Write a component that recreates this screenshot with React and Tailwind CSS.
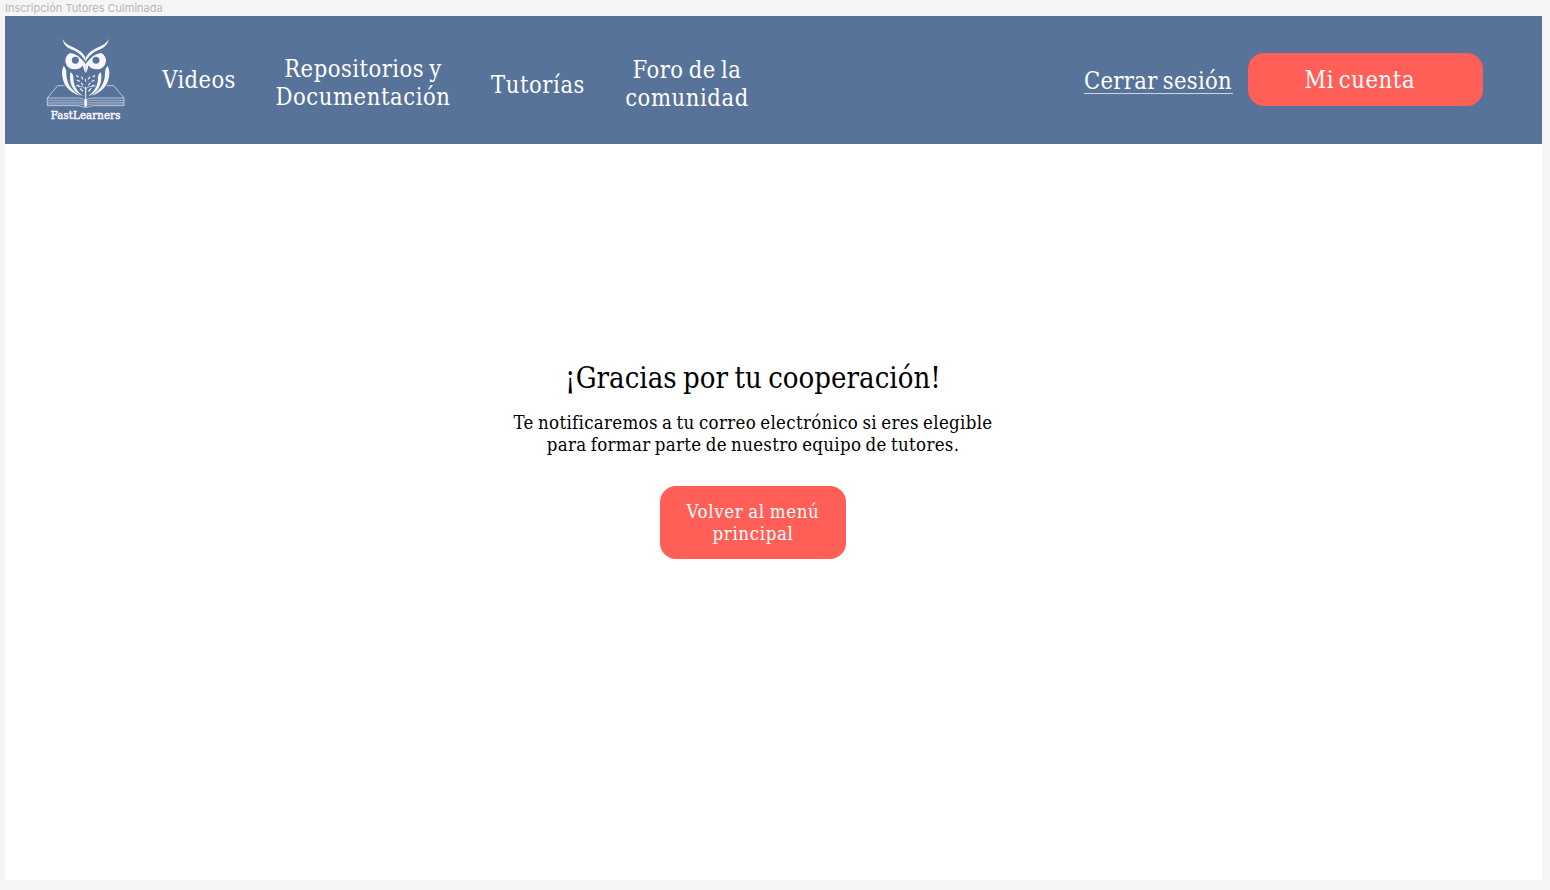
const serif = "font-['DejaVu_Serif_Condensed','DejaVu_Serif',serif]";

function HalfOwl() {
  return (
    <g>
      <path fill="#f7f8ff" d="M68 26C73 38 82 44 98 51C117 59 130 69 137 83V95C127 77 116 67 99 60C82 53 70 45 68 26Z" />
      <path fill="#f7f8ff" fillRule="evenodd" d="M90 69C108 71 123 83 137 102V129C132 122 130 115 129 106C124 114 115 118 104 118A26 26 0 0 1 90 69ZM106 80A10.5 10.5 0 1 0 106 101A10.5 10.5 0 1 0 106 80Z" />
      <path fill="#f7f8ff" d="M71 108C77 114 79 120 79 130C79 158 91 179 119 197C87 187 67 164 66 130C66 121 68 114 71 108Z" />
      <path fill="#f7f8ff" d="M91 127C98 131 100 135 100 143C100 164 109 184 130 198C106 190 91 172 90 143C90 136 90 131 91 127Z" />
      <g fill="none" stroke="#f7f8ff" strokeLinecap="round" strokeWidth="3.4">
        <path d="M110 137L115 140M125 141L128 147M112 151L118 154M124 159L128 165M113 165L119 170M121 176L128 183" />
      </g>
      <g fill="none" stroke="#dfe7fa" strokeWidth="2.2">
        <path d="M74 167H53L22 204V227H111C124 227 127 232 137 232" />
        <path d="M106 168C123 168 133 171 137 178" />
        <path d="M22 204H109C124 204 133 207 137 212" />
        <path opacity=".75" d="M23 211H110C124 211 130 213 137 217M23 217H110C124 217 130 219 137 221M23 222H112C125 222 130 224 137 226" />
      </g>
    </g>
  );
}

function Logo() {
  return (
    <div className="ml-[35px] mt-[14px] h-[100px] w-[95px] shrink-0">
      <svg viewBox="0 0 285 300" className="h-full w-full" role="img" aria-label="FastLearners">
        <HalfOwl />
        <g transform="translate(274 0) scale(-1 1)">
          <HalfOwl />
        </g>
        <path d="M137 147V155M137 170V228" stroke="#f7f8ff" strokeWidth="3" />
        <path d="M137 208V230" stroke="#f7f8ff" strokeWidth="8" />
        <text
          x="137"
          y="266"
          textAnchor="middle"
          textLength="209"
          lengthAdjust="spacingAndGlyphs"
          fill="#f7f8ff"
          stroke="#f7f8ff"
          strokeWidth="1.5"
          className="font-['DejaVu_Serif_Condensed','DejaVu_Serif',serif] text-[35px]"
        >
          FastLearners
        </text>
      </svg>
    </div>
  );
}

export default function App() {
  return (
    <div className="h-[890px] w-[1550px] overflow-hidden bg-[#f5f5f5] pl-[5px]">
      <div className="h-[15.5px] font-['Inter',sans-serif] text-[11px] leading-[16px] text-[#b8b8b8]">
        Inscripción Tutores Culminada
      </div>
      <div className={`h-[864px] w-[1536.5px] bg-white ${serif}`}>
        <header className="flex h-32 items-start bg-[#587399] text-[23.5px] leading-7 tracking-[0.6px] text-white [word-spacing:-2px]">
          <Logo />
          <nav className="flex items-start text-center">
            <a className="ml-[19px] mt-[50px] w-[90px] whitespace-nowrap tracking-[0.4px]">Videos</a>
            <a className="ml-[24px] mt-[39px] w-[190px] whitespace-nowrap">
              <span className="tracking-[0.5px]">Repositorios y</span>
              <br />
              Documentación
            </a>
            <a className="ml-[25px] mt-[55px] w-[110px] whitespace-nowrap">Tutorías</a>
            <a className="ml-[24px] mt-[40px] w-[140px] whitespace-nowrap">
              <span className="tracking-[0.5px]">Foro de la</span>
              <br />
              comunidad
            </a>
          </nav>
          <div className="ml-auto mr-[58.5px] flex items-start">
            <a className="mt-[51px] h-[27.5px] w-[149px] whitespace-nowrap border-b border-white/70 text-center tracking-[0.35px]">
              Cerrar sesión
            </a>
            <button className="ml-[15px] mt-[37px] h-[53px] w-[235.5px] rounded-[16px] bg-[#ff5f57] pr-[11px] pt-[2px] text-center tracking-[0.6px] [word-spacing:-2.5px]">
              Mi cuenta
            </button>
          </div>
        </header>
        <main className="flex w-[1496px] flex-col items-center text-center text-black">
          <h1 className="mt-[216px] whitespace-nowrap text-[29px] leading-9 tracking-[0.05px] [word-spacing:-2px]">
            ¡Gracias por tu cooperación!
          </h1>
          <p className="mt-[16px] whitespace-nowrap text-[18.5px] leading-[22.5px] tracking-[0.32px] [word-spacing:-1.3px]">
            Te notificaremos a tu correo electrónico si eres elegible
            <br />
            para formar parte de nuestro equipo de tutores.
          </p>
          <button className="mt-[29.5px] h-[73px] w-[186.5px] rounded-[16px] bg-[#ff5f57] pt-[1px] text-[18.5px] leading-[22.5px] tracking-[0.65px] text-white [word-spacing:-1px]">
            Volver al menú
            <br />
            principal
          </button>
        </main>
      </div>
    </div>
  );
}
